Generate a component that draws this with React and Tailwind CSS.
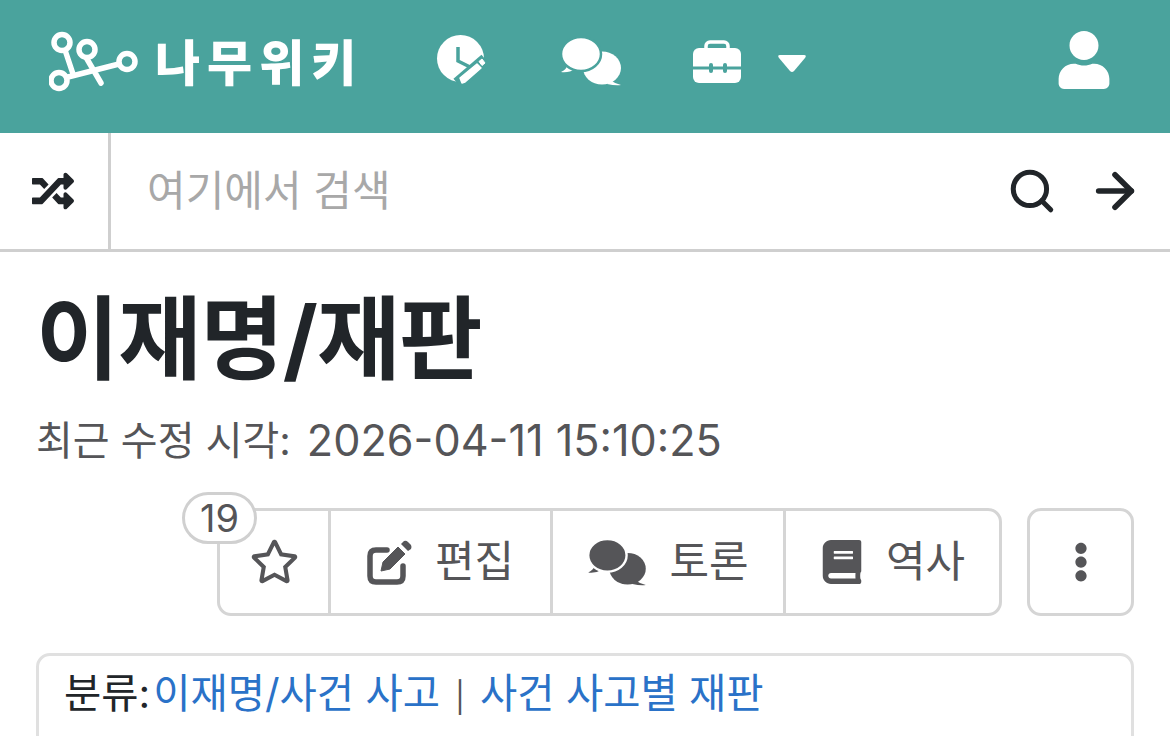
import React from 'react';
import { FaRandom, FaRegStar, FaBook, FaEllipsisV, FaUser } from 'react-icons/fa';
import { ArrowRight, Search } from 'lucide-react';

const font = { fontFamily: 'Inter, "Noto Sans CJK KR", sans-serif' };
const teal = '#4aa39d';

const LogoNodes = () => (
  <svg width="100" height="72" viewBox="0 0 100 72" fill="none" stroke="white" strokeWidth="5.5" strokeLinecap="round">
    <path d="M16 23 L24 47 M38 32 L52 56 M19 50 L70 37" />
    <circle cx="13" cy="15.5" r="8" fill={teal} />
    <circle cx="38" cy="22.5" r="8" fill={teal} />
    <circle cx="78" cy="34.5" r="8" fill={teal} />
    <circle cx="10" cy="53.5" r="8" fill={teal} />
  </svg>
);

const ClockPencil = ({ className }) => (
  <svg className={className} width="52" height="52" viewBox="0 0 52 52" fill="none">
    <circle cx="24.5" cy="24.5" r="23.5" fill="white" />
    <path d="M22 13 V27 L34 33" stroke={teal} strokeWidth="3.5" />
    <path d="M22 50 L50 26" stroke={teal} strokeWidth="14" />
    <path d="M26 49 L24 44 L41 30 L45 34 L29 48 Z" fill="white" stroke="white" strokeWidth="1.5" strokeLinejoin="round" />
    <path d="M43 27.5 L46 25 L49 29 L46 31.5 Z" fill="white" stroke="white" strokeLinejoin="round" />
  </svg>
);

const Bubbles = ({ className, color, gap, width, height }) => (
  <svg className={className} width={width} height={height} viewBox="0 0 62 50">
    <ellipse cx="42" cy="32" rx="19" ry="16.5" fill={color} />
    <path d="M50 44 Q54 47 61 49 Q56 50 47 48 Z" fill={color} />
    <path d="M8 28 Q7 33 1 36 Q9 37 15 33 Z" fill={color} />
    <ellipse cx="21" cy="18" rx="20" ry="17" fill={color} stroke={gap} strokeWidth="2.5" />
  </svg>
);

const Toolbox = ({ className }) => (
  <svg className={className} width="50" height="43" viewBox="0 0 50 43" fill="none">
    <rect x="14" y="2" width="22" height="12" rx="4" stroke="white" strokeWidth="3.5" />
    <rect x="1" y="8" width="48" height="35" rx="6" fill="white" />
    <path d="M1 28 H49" stroke={teal} strokeWidth="3" />
    <rect x="17" y="23" width="4" height="10" rx="2" fill={teal} />
    <rect x="31" y="23" width="4" height="10" rx="2" fill={teal} />
  </svg>
);

const EditIcon = () => (
  <svg width="46" height="46" viewBox="0 0 46 46" fill="none">
    <path d="M20 11 H9 Q3 11 3 17 V37 Q3 43 9 43 H30 Q36 43 36 37 V27" stroke="#555558" strokeWidth="5.5" strokeLinecap="round" />
    <path d="M14 32 L16 23 L31 8 L38 15 L23 30 Z" fill="#555558" stroke="#555558" strokeWidth="1" strokeLinejoin="round" />
    <path d="M34 5 L37 2 Q39 1 41 3 L44 6 Q45 8 44 10 L41 12 Z" fill="#555558" />
  </svg>
);

const ActionButton = ({ icon, label, className }) => (
  <div className={`flex items-center justify-center h-full ${className}`}>
    {icon}
    <span className="text-[43px] leading-none text-[#555558] ml-[22px]">{label}</span>
  </div>
);

const App = () => {
  return (
    <div className="w-[1170px] h-[736px] overflow-hidden bg-white text-[#212529]" style={font}>
      <header className="h-[133px] bg-[#4aa39d] flex items-center text-white">
        <div className="ml-[49px] mt-[-8px]">
          <LogoNodes />
        </div>
        <span className="ml-[6px] w-[204px] text-[49px] leading-none font-black tracking-[7px] mb-[6px] whitespace-nowrap">나무위키</span>
        <ClockPencil className="ml-[77px] mb-[13px]" />
        <Bubbles className="ml-[72px] mb-[11px]" color="white" gap={teal} width={62} height={50} />
        <Toolbox className="ml-[70px] mb-[11px]" />
        <svg className="ml-[35px] mb-[5px]" width="30" height="20" viewBox="0 0 30 20" fill="white">
          <path d="M3 1 H27 Q30 1 28 4 L17 17 Q15 19 13 17 L2 4 Q0 1 3 1 Z" />
        </svg>
        <FaUser className="ml-[248px] mb-[13px] text-[58px]" />
      </header>

      <div className="h-[119px] flex items-stretch border-b-[3px] border-[#cfcfcf]">
        <div className="w-[111px] flex items-center justify-center border-r-[3px] border-[#cfcfcf] pr-[2px]">
          <FaRandom className="text-[42px] text-[#212529]" />
        </div>
        <div className="flex-1 flex items-center pl-[36px] pr-[27px]">
          <span className="flex-1 text-[42px] leading-none text-[#a8a8a8]">여기에서 검색</span>
          <Search size={50} strokeWidth={2.4} className="text-[#212529]" />
          <ArrowRight size={56} strokeWidth={2.4} className="ml-[30px] text-[#212529]" />
        </div>
      </div>

      <div className="pl-[36px] pr-[36px]">
        <h1 className="text-[90.5px] leading-none font-bold mt-[42px] tracking-[-1px]">이재명/재판</h1>
        <p className="h-[42px] flex items-center text-[40px] leading-none text-[#555558] mt-[35px] whitespace-nowrap">
          최근 수정 시각:<span className="ml-[16px] text-[43.2px]">2026-04-11 15:10:25</span>
        </p>

        <div className="flex justify-end mt-[46px] h-[108px]">
          <div className="relative flex w-[785px] border-[3px] border-[#d5d5d5] rounded-[14px] bg-white">
            <span className="absolute left-[-38px] top-[-19px] w-[75px] h-[52px] flex items-center justify-center rounded-full border-[3px] border-[#d0d0d0] bg-white text-[38px] leading-none text-[#555558]">19</span>
            <div className="w-[111px] flex items-center justify-center border-r-[3px] border-[#d5d5d5]">
              <FaRegStar className="text-[49px] text-[#555558]" />
            </div>
            <ActionButton
              className="w-[222px] border-r-[3px] border-[#d5d5d5]"
              icon={<EditIcon />}
              label="편집"
            />
            <ActionButton
              className="w-[233px] border-r-[3px] border-[#d5d5d5]"
              icon={<Bubbles color="#555558" gap="white" width={60} height={48} />}
              label="토론"
            />
            <ActionButton
              className="flex-1"
              icon={<FaBook className="text-[44px] text-[#555558]" />}
              label="역사"
            />
          </div>
          <div className="ml-[25px] w-[107px] flex items-center justify-center border-[3px] border-[#d5d5d5] rounded-[14px]">
            <FaEllipsisV className="text-[40px] text-[#555558]" />
          </div>
        </div>

        <div className="mt-[37px] h-[100px] border-[3px] border-[#e0e0e0] rounded-[14px] pl-[25px] pt-[13px] text-[40.5px] leading-[50px] whitespace-nowrap">
          <span className="text-[#212529]">분류:</span>
          <span className="text-[#2a72c8] ml-[3px]">이재명/사건 사고</span>
          <span className="text-[#555558] mx-[15px] text-[30px]">|</span>
          <span className="text-[#2a72c8]">사건 사고별 재판</span>
        </div>
      </div>
    </div>
  );
};

export default App;
